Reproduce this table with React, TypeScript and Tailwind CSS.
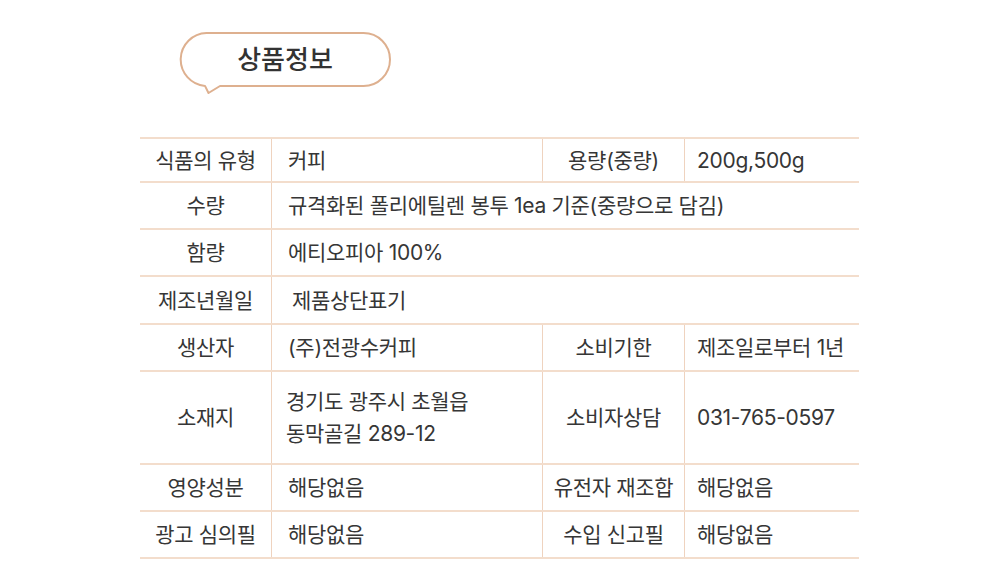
import React from "react";

const H = "border-b-2 border-[#f3ddcc]";
const V = "border-r border-[#efd3bf]";

function Label({ children, w }: { children: React.ReactNode; w: string }) {
  return (
    <div className={`${w} ${V} flex items-center justify-center text-center whitespace-nowrap`}>
      {children}
    </div>
  );
}

function Value({ children, w, pl = "pl-[16px]", last }: { children: React.ReactNode; w: string; pl?: string; last?: boolean }) {
  return (
    <div className={`${w} ${last ? "" : V} flex items-center ${pl} whitespace-nowrap`}>{children}</div>
  );
}

export default function App() {
  return (
    <div
      className="w-[1000px] h-[588px] bg-white text-[#363636]"
      style={{ fontFamily: 'Inter, "Noto Sans CJK KR", "Noto Sans", sans-serif' }}
    >
      <div className="pt-[31px] pl-[178px]">
        <div className="relative w-[214px] h-[66px]">
          <svg className="absolute inset-0" width="214" height="66" viewBox="0 0 214 66" fill="none">
            <path
              d="M42 55 H185.5 A26.5 26.5 0 0 0 185.5 2 H28.5 A26.5 26.5 0 0 0 27 54.9 L30.5 62 L42 55 Z"
              stroke="#deb08f"
              strokeWidth="2"
              strokeLinejoin="round"
              fill="white"
            />
          </svg>
          <div className="relative h-[57px] flex items-center justify-center text-[26px] font-medium text-[#333]">
            상품정보
          </div>
        </div>
      </div>

      <div className="ml-[140px] mt-[40px] w-[719px] border-t-2 border-[#f3ddcc] text-[21px] leading-none tracking-[-0.3px]">
        <div className={`flex h-[44px] ${H}`}>
          <Label w="w-[132px]">식품의 유형</Label>
          <Value w="w-[271px]">커피</Value>
          <Label w="w-[142px]">용량(중량)</Label>
          <Value w="w-[174px]" pl="pl-[12px]" last>200g,500g</Value>
        </div>
        <div className={`flex h-[47px] ${H}`}>
          <Label w="w-[132px]">수량</Label>
          <Value w="flex-1" last>규격화된 폴리에틸렌 봉투 1ea 기준(중량으로 담김)</Value>
        </div>
        <div className={`flex h-[47px] ${H}`}>
          <Label w="w-[132px]">함량</Label>
          <Value w="flex-1" last>에티오피아 100%</Value>
        </div>
        <div className={`flex h-[48px] ${H}`}>
          <Label w="w-[132px]">제조년월일</Label>
          <Value w="flex-1" pl="pl-[20px]" last>제품상단표기</Value>
        </div>
        <div className={`flex h-[47px] ${H}`}>
          <Label w="w-[132px]">생산자</Label>
          <Value w="w-[271px]">(주)전광수커피</Value>
          <Label w="w-[142px]">소비기한</Label>
          <Value w="w-[174px]" pl="pl-[12px]" last>제조일로부터 1년</Value>
        </div>
        <div className={`flex h-[93px] ${H}`}>
          <Label w="w-[132px]">소재지</Label>
          <div className={`w-[271px] ${V} flex flex-col justify-center pl-[14px] leading-[32px] whitespace-nowrap`}>
            <span>경기도 광주시 초월읍</span>
            <span>동막골길 289-12</span>
          </div>
          <Label w="w-[142px]">소비자상담</Label>
          <Value w="w-[174px]" pl="pl-[12px]" last>031-765-0597</Value>
        </div>
        <div className={`flex h-[47px] ${H}`}>
          <Label w="w-[132px]">영양성분</Label>
          <Value w="w-[271px]">해당없음</Value>
          <Label w="w-[142px]">유전자 재조합</Label>
          <Value w="w-[174px]" pl="pl-[12px]" last>해당없음</Value>
        </div>
        <div className={`flex h-[47px] ${H}`}>
          <Label w="w-[132px]">광고 심의필</Label>
          <Value w="w-[271px]">해당없음</Value>
          <Label w="w-[142px]">수입 신고필</Label>
          <Value w="w-[174px]" pl="pl-[12px]" last>해당없음</Value>
        </div>
      </div>
    </div>
  );
}
